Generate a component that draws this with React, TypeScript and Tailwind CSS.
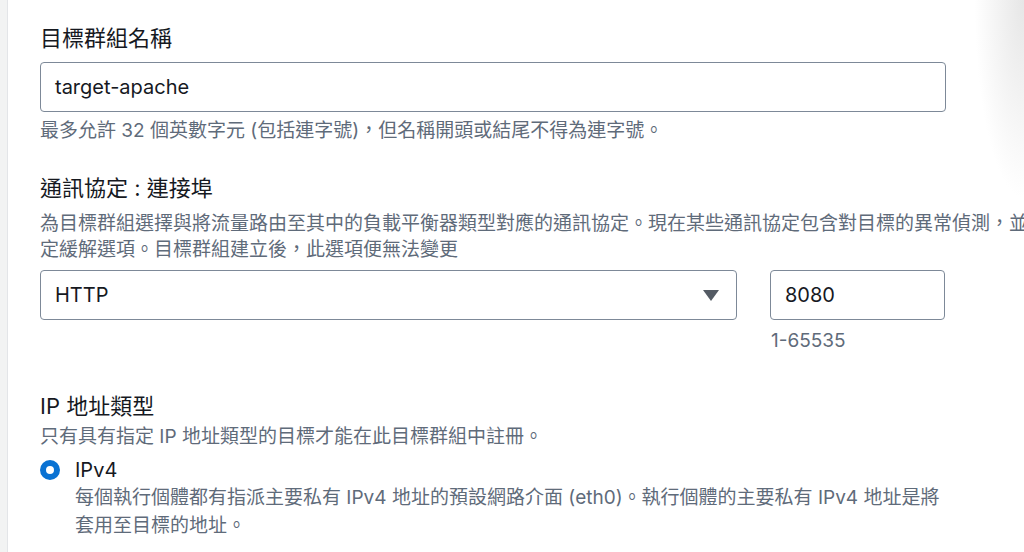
const FONT = "font-['Inter','Noto_Sans_CJK_TC',sans-serif]";

function Label({ children }: { children: React.ReactNode }) {
  return <div className="text-[22px] leading-[30px] text-[#16191f]">{children}</div>;
}

function Hint({ children, className = "" }: { children: React.ReactNode; className?: string }) {
  return (
    <div className={`text-[19px] leading-[26px] text-[#5f6b7a] whitespace-nowrap ${className}`}>
      {children}
    </div>
  );
}

export default function App() {
  return (
    <div className={`relative flex h-[552px] w-[1024px] overflow-hidden bg-white ${FONT}`}>
      {/* left rail */}
      <div className="w-[8px] shrink-0 bg-[#f2f3f3] border-r border-[#e3e5e8]" />

      <div className="flex flex-col pl-[32px] pt-[23px]">
        {/* Target group name */}
        <Label>目標群組名稱</Label>
        <div className="mt-[9px] flex h-[50px] w-[906px] items-center rounded-[4px] border border-[#7d8998] px-[14px] text-[20px] text-[#16191f]">
          target-apache
        </div>
        <Hint className="mt-[6px]">
          最多允許 32 個英數字元 (包括連字號)，但名稱開頭或結尾不得為連字號。
        </Hint>

        {/* Protocol : Port */}
        <Label>
          <span className="mt-[29px] block">通訊協定 : 連接埠</span>
        </Label>
        <Hint className="mt-[8px]">
          <div>為目標群組選擇與將流量路由至其中的負載平衡器類型對應的通訊協定。現在某些通訊協定包含對目標的異常偵測，並設</div>
          <div>定緩解選項。目標群組建立後，此選項便無法變更</div>
        </Hint>
        <div className="mt-[7px] flex gap-[33px]">
          <div className="flex h-[50px] w-[697px] items-center justify-between rounded-[4px] border border-[#7d8998] pl-[14px] pr-[17px] text-[20px] text-[#16191f]">
            <span>HTTP</span>
            <svg width="16" height="11" viewBox="0 0 16 11">
              <path d="M0 0H16L8 11Z" fill="#545b64" />
            </svg>
          </div>
          <div className="flex flex-col">
            <div className="flex h-[50px] w-[175px] items-center rounded-[4px] border border-[#7d8998] px-[14px] text-[20px] text-[#16191f]">
              8080
            </div>
            <Hint className="mt-[8px] pl-[1px]">1-65535</Hint>
          </div>
        </div>

        {/* IP address type */}
        <div className="mt-[37px]">
          <Label>IP 地址類型</Label>
        </div>
        <Hint className="mt-[3px]">只有具有指定 IP 地址類型的目標才能在此目標群組中註冊。</Hint>
        <div className="mt-[6px] flex items-center gap-[15px]">
          <span className="h-[20px] w-[20px] rounded-full border-[6px] border-[#0972d3] bg-white" />
          <span className="text-[20px] leading-[28px] text-[#16191f]">IPv4</span>
        </div>
        <div className="pl-[35px] text-[19px] leading-[28px] text-[#5f6b7a]">
          <div>每個執行個體都有指派主要私有 IPv4 地址的預設網路介面 (eth0)。執行個體的主要私有 IPv4 地址是將</div>
          <div>套用至目標的地址。</div>
        </div>
      </div>

      {/* window shadow at top-right */}
      <div className="pointer-events-none absolute right-0 top-0 h-[200px] w-[50px] bg-[radial-gradient(ellipse_at_top_right,#e6e6e6_0%,rgba(255,255,255,0)_70%)]" />
    </div>
  );
}
